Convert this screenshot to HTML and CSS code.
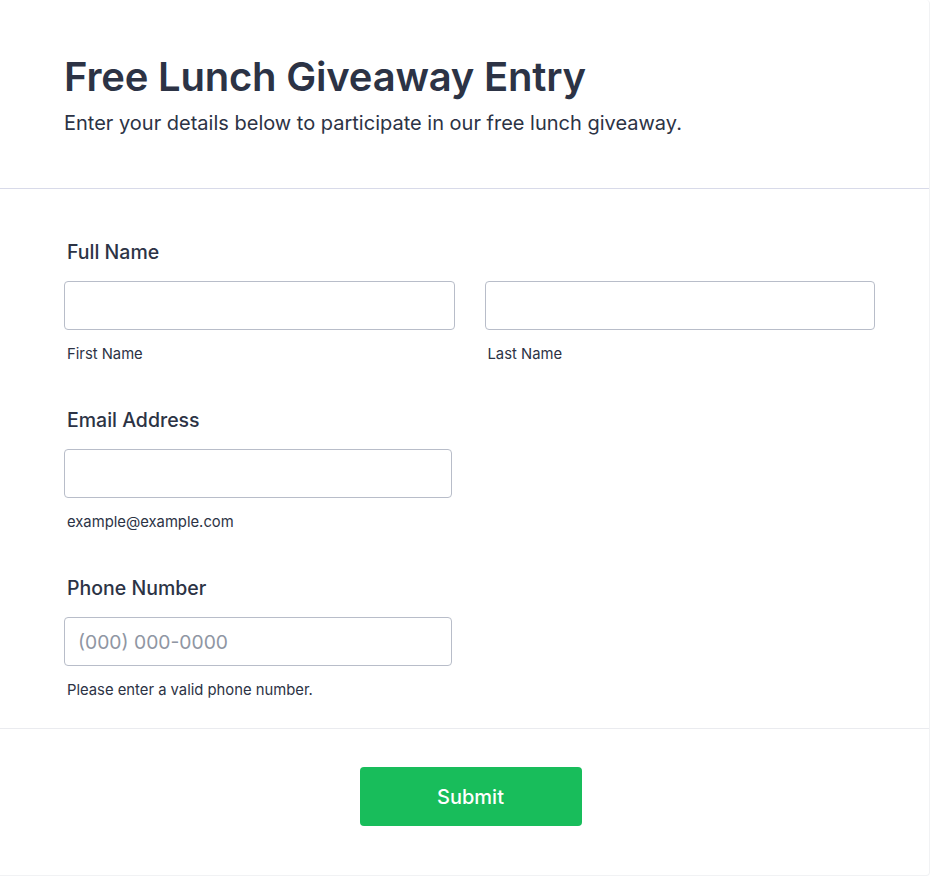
FILE: index.html
```html
<!DOCTYPE html>
<html lang="en">
<head>
<meta charset="utf-8">
<title>Free Lunch Giveaway Entry</title>
<link rel="stylesheet" href="styles.css">
</head>
<body>
<form class="card">
  <header class="header">
    <h1 class="title">Free Lunch Giveaway Entry</h1>
    <p class="subtitle">Enter your details below to participate in our free lunch giveaway.</p>
  </header>
  <section class="fields">
    <div class="field">
      <label class="label">Full Name</label>
      <div class="name-row">
        <div class="sub-field">
          <input class="input" type="text">
          <span class="sublabel">First Name</span>
        </div>
        <div class="sub-field">
          <input class="input" type="text">
          <span class="sublabel">Last Name</span>
        </div>
      </div>
    </div>
    <div class="field">
      <label class="label">Email Address</label>
      <div class="sub-field single">
        <input class="input" type="email">
        <span class="sublabel">example@example.com</span>
      </div>
    </div>
    <div class="field">
      <label class="label">Phone Number</label>
      <div class="sub-field single">
        <input class="input" type="tel" placeholder="(000) 000-0000">
        <span class="sublabel">Please enter a valid phone number.</span>
      </div>
    </div>
  </section>
  <footer class="footer">
    <button class="submit" type="button">Submit</button>
  </footer>
</form>
</body>
</html>
```

FILE: styles.css
```css
* { box-sizing: border-box; }

html, body {
  margin: 0;
  padding: 0;
  background: #ffffff;
}

body {
  font-family: Inter, "Noto Sans", sans-serif;
  color: #2c3345;
}

.card {
  width: 930px;
  height: 876px;
  border-right: 1px solid #f1f2f4;
  border-bottom: 1px solid #f1f2f4;
  border-radius: 0 4px 4px 0;
  display: flex;
  flex-direction: column;
}

.header {
  padding: 53px 64px 53px;
  border-bottom: 1px solid #d8dae9;
}

.title {
  margin: 0;
  font-size: 40px;
  line-height: 48px;
  font-weight: 600;
  letter-spacing: -0.2px;
}

.subtitle {
  margin: 10px 0 0;
  font-size: 20px;
  line-height: 24px;
  font-weight: 400;
}

.fields {
  padding: 51px 64px 28px;
  display: flex;
  flex-direction: column;
  gap: 44px;
  border-bottom: 1px solid #eaebef;
}

.field {
  display: flex;
  flex-direction: column;
}

.label {
  padding-left: 3px;
  font-size: 19.5px;
  line-height: 24px;
  font-weight: 500;
  margin-bottom: 17px;
}

.name-row {
  display: flex;
  gap: 30px;
  width: 811px;
}

.sub-field {
  display: flex;
  flex-direction: column;
  flex: 1;
}

.sub-field.single {
  width: 388px;
  flex: none;
}

.input {
  height: 49px;
  width: 100%;
  border: 1px solid #b8bdc9;
  border-radius: 4px;
  padding: 0 13px;
  font-family: inherit;
  font-size: 19.3px;
  color: #2c3345;
  background: #ffffff;
  outline: none;
}

.input::placeholder {
  color: #8f96a3;
}

.sublabel {
  margin-top: 14px;
  padding-left: 3px;
  font-size: 14.8px;
  line-height: 20px;
  color: #2c3345;
}

.footer {
  display: flex;
  justify-content: center;
  padding: 38px 52px 0 64px;
}

.submit {
  width: 222px;
  height: 59px;
  border: none;
  border-radius: 4px;
  background: #18bd5b;
  color: #ffffff;
  font-family: inherit;
  font-size: 20px;
  font-weight: 500;
}
```
